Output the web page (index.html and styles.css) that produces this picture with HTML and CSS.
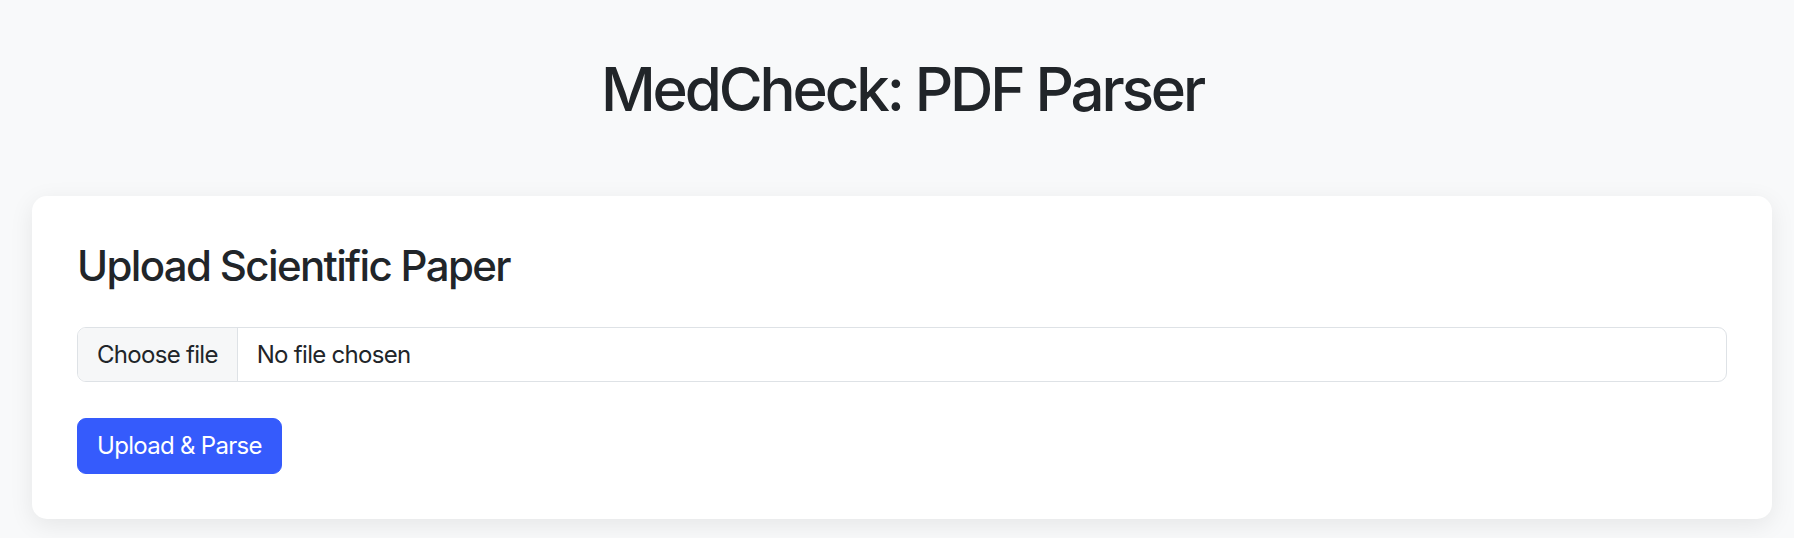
FILE: index.html
```html
<!DOCTYPE html>
<html lang="en">
<head>
<meta charset="utf-8">
<title>MedCheck: PDF Parser</title>
<link rel="stylesheet" href="styles.css">
</head>
<body>
<main class="container">
  <h1 class="title">MedCheck: PDF Parser</h1>
  <section class="card">
    <h3 class="card-title">Upload Scientific Paper</h3>
    <form class="upload-form">
      <label class="file-input">
        <input type="file" accept="application/pdf" class="file-native">
        <span class="file-btn">Choose file</span>
        <span class="file-name">No file chosen</span>
      </label>
      <button type="button" class="btn-primary">Upload &amp; Parse</button>
    </form>
  </section>
</main>
</body>
</html>
```
FILE: styles.css
```css
* { box-sizing: border-box; }

html, body {
  margin: 0;
  padding: 0;
  background: #f8f9fa;
}

body {
  font-family: Inter, "Noto Sans", "Liberation Sans", sans-serif;
  color: #212529;
  font-size: 24px;
  line-height: 1.5;
  letter-spacing: -0.7px;
}

.container {
  margin: 0 22px 0 32px;
  padding-top: 53px;
  padding-bottom: 19px;
}

.title {
  margin: 0 0 71px;
  font-size: 60px;
  font-weight: 500;
  line-height: 1.2;
  text-align: center;
  letter-spacing: -3.1px;
}

.card {
  background: #fff;
  border-radius: 15px;
  box-shadow: 0 6px 24px rgba(0, 0, 0, 0.08);
  padding: 45px;
}

.card-title {
  margin: 0 0 36px;
  font-size: 42px;
  font-weight: 500;
  line-height: 1.2;
  letter-spacing: -1.65px;
}

.upload-form {
  display: flex;
  flex-direction: column;
  align-items: flex-start;
  gap: 36px;
}

.file-input {
  display: flex;
  align-self: stretch;
  height: 55px;
  border: 1px solid #dee2e6;
  border-radius: 9px;
  overflow: hidden;
  cursor: pointer;
}

.file-native {
  display: none;
}

.file-btn {
  display: flex;
  align-items: center;
  padding: 0 19px;
  background: #f6f7f8;
  border-right: 1px solid #dee2e6;
}

.file-name {
  display: flex;
  align-items: center;
  padding: 0 19px;
}

.btn-primary {
  font: inherit;
  letter-spacing: inherit;
  color: #fff;
  background: #355bfc;
  border: 1px solid #355bfc;
  border-radius: 9px;
  padding: 9px 19px;
  height: 56px;
  cursor: pointer;
}
```
